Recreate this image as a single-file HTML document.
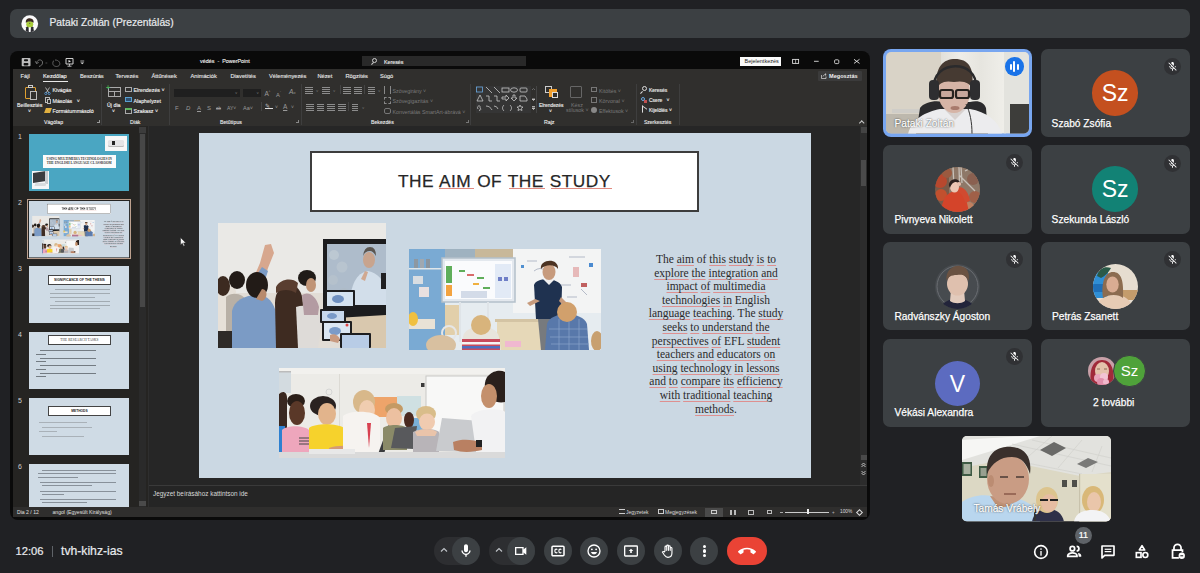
<!DOCTYPE html>
<html><head><meta charset="utf-8">
<style>
*{margin:0;padding:0;box-sizing:border-box}
html,body{width:1200px;height:573px;overflow:hidden;background:#202124;font-family:"Liberation Sans",sans-serif;position:relative}
.a{position:absolute}
.topbar{left:10px;top:9px;width:1180px;height:29px;background:#3c4043;border-radius:7px}
.tb-name{left:49.5px;top:16.5px;font-size:10.3px;color:#e8eaed;white-space:nowrap;-webkit-text-stroke:0.2px #e8eaed}
.ppt{left:10px;top:51px;width:860px;height:469px;background:#0a0a0a;border-radius:8px;overflow:hidden}
.tile{background:#3c4043;border-radius:7px;overflow:hidden}
.nm{font-size:10.2px;color:#fff;white-space:nowrap;-webkit-text-stroke:0.25px #fff;text-shadow:0 0 1px rgba(0,0,0,.35)}
.av{border-radius:50%;color:#fff;text-align:center}
.mute{width:17px;height:17px;border-radius:50%;background:#303134}
.t{font-size:5.3px;color:#f2f2f2;white-space:nowrap;line-height:7px;-webkit-text-stroke:0.12px #f2f2f2}
.t2{color:#9a9a9a;white-space:nowrap;line-height:8px}
.t3{font-size:5.3px;color:#7a7a7a;white-space:nowrap;line-height:7px}
.g{font-size:5.2px;color:#e8e8e8;white-space:nowrap;line-height:7px;-webkit-text-stroke:0.12px #e8e8e8}
.sep{top:84px;width:0.8px;height:41px;background:#3e3e3e}
.lines{width:7.5px;height:7px;background:repeating-linear-gradient(#8c8c8c 0 0.9px,transparent 0.9px 2.1px)}
.chev{font-size:4px;color:#777;line-height:5px}
.body{font-family:"Liberation Serif",serif;font-size:11.5px;line-height:13.6px;color:#2b2b2b;text-align:center;white-space:nowrap}
.body u{text-decoration-color:#de9090;text-underline-offset:1.5px;text-decoration-thickness:0.8px}
.num{left:18px;font-size:7px;color:#d0d0d0;line-height:8px}
.thumb{left:29px;width:100px;height:57px;background:#cfdbe5}
.ttl{height:10px;background:#fff;border:0.7px solid #444;font-size:3.2px;line-height:8.6px;text-align:center;color:#333;white-space:nowrap}
.tl{background:repeating-linear-gradient(#cfdbe5 0 1.5px,#9aa5ae 1.5px 2.3px)}
.tl2{background:repeating-linear-gradient(#cfdbe5 0 1px,#6f7880 1px 1.8px,#cfdbe5 1.8px 2.8px,#8e98a0 2.8px 3.5px)}
.img{filter:blur(0.6px)}
.btn{width:28px;height:28px;border-radius:50%;background:#3c4043;top:537px}
</style></head><body>

<!-- top bar -->
<div class="a topbar"></div>
<svg class="a" style="left:21px;top:14.5px" width="17.5" height="17.5" viewBox="0 0 20 20">
<defs><clipPath id="cpa"><circle cx="10" cy="10" r="9.6"/></clipPath></defs>
<circle cx="10" cy="10" r="9.6" fill="#fafafa"/>
<g clip-path="url(#cpa)">
<path d="M5 20 L6 14 C7 12 13 12 14 14 L15 20Z" fill="#2a2a30"/>
<path d="M8.6 13.5 L11.4 13.5 L11 20 H9Z" fill="#fff"/>
<ellipse cx="10" cy="10.5" rx="4" ry="3.6" fill="#a8cc3a"/>
<path d="M5.6 9 C5 4 9 3.5 11 4 C14 4.5 15 7 14.2 9 C13 7 8 6.5 5.6 9Z" fill="#3a2a22"/>
<circle cx="10" cy="9.5" r="0.6" fill="#333"/>
</g></svg>
<div class="a tb-name">Pataki Zoltán (Prezentálás)</div>

<!-- PowerPoint window -->
<div class="a ppt" id="ppt"></div>
<!-- ribbon bg -->
<div class="a" style="left:13px;top:69px;width:854px;height:57px;background:#302f2d"></div>
<!-- main area -->
<div class="a" style="left:13px;top:126px;width:135px;height:381px;background:#252422"></div>
<div class="a" style="left:148px;top:126px;width:719px;height:359px;background:#262626"></div>
<div class="a" style="left:148px;top:485px;width:719px;height:1px;background:#3a3a3a"></div>
<div class="a" style="left:148px;top:486px;width:719px;height:21px;background:#252525"></div>
<div class="a" style="left:13px;top:507px;width:854px;height:9.7px;background:#2f2e2d"></div>
<!-- title bar -->
<svg class="a" style="left:21px;top:57px" width="66" height="10" viewBox="0 0 66 10">
<path d="M1.5 1 H8.5 Q9.5 1 9.5 2 V8.5 Q9.5 9.3 8.5 9.3 H1.5 Q0.7 9.3 0.7 8.5 V2 Q0.7 1 1.5 1Z" fill="#bdbdbd"/>
<rect x="3" y="2.2" width="4" height="2" rx="0.8" fill="#111"/><rect x="2.6" y="6" width="4.8" height="2.4" rx="0.8" fill="#111"/>
<path d="M15.5 6.5 C16 2 21 2 21.5 5 C22 8 19.5 9 18 9.5 M15.5 6.5 L14.3 4.3 M15.5 6.5 L17.7 5.5" stroke="#7a7a7a" stroke-width="0.9" fill="none"/>
<path d="M24.5 6 h1.8" stroke="#666" stroke-width="0.7"/>
<path d="M34 3 C38 3 39.5 6 38.5 8 C37.5 10 33 10 32 7.5 C31.5 6 32 4 33 3.5" stroke="#6a6a6a" stroke-width="0.9" fill="none"/>
<path d="M45 1.5 H52 V7 H45Z" fill="none" stroke="#cfcfcf" stroke-width="1"/><path d="M47.5 3 L50 4.3 L47.5 5.6Z" fill="#eee"/><path d="M48.5 7 V8.8 M46.5 9.2 H50.5" stroke="#cfcfcf" stroke-width="0.9"/>
<path d="M59.3 4 H63.2" stroke="#ccc" stroke-width="0.8"/><path d="M59.3 5.5 H63.2 L61.25 7.3Z" fill="#ddd"/>
</svg>
<div class="a" style="left:200px;top:58px;font-size:5.4px;color:#f0f0f0;white-space:nowrap;-webkit-text-stroke:0.12px #f0f0f0">védés&nbsp; - &nbsp;PowerPoint</div>
<div class="a" style="left:362px;top:56px;width:164px;height:10px;background:#292929"></div>
<div class="a" style="left:372px;top:58px;width:5px;height:5px;border:1px solid #ccc;border-radius:50%"></div>
<div class="a" style="left:371px;top:63px;width:3px;height:1px;background:#ccc;transform:rotate(-45deg)"></div>
<div class="a" style="left:384px;top:58.5px;font-size:5.3px;color:#f0f0f0;-webkit-text-stroke:0.12px #f0f0f0">Keresés</div>
<div class="a" style="left:740px;top:57px;width:41px;height:9px;background:#fafafa"></div>
<div class="a" style="left:744.5px;top:58.2px;font-size:5.5px;color:#1a1a1a">Bejelentkezés</div>
<svg class="a" style="left:790px;top:57px" width="72" height="9" viewBox="0 0 72 9">
<rect x="2.6" y="2.4" width="6" height="4" fill="none" stroke="#ddd" stroke-width="0.9"/><path d="M5.6 2.4 V6.4" stroke="#ddd" stroke-width="0.7"/>
<path d="M24 4.3 H28.7" stroke="#ddd" stroke-width="0.9"/>
<rect x="44.6" y="2.8" width="4.2" height="3.8" rx="1" fill="none" stroke="#ddd" stroke-width="0.9"/>
<path d="M64 2.3 L69.5 6.4 M69.5 2.3 L64 6.4" stroke="#e6e6e6" stroke-width="0.9"/>
</svg>
<!-- tabs -->
<div class="a" style="left:13px;top:73px;width:600px;height:8px;font-size:5.7px;color:#e6e6e6;white-space:nowrap;-webkit-text-stroke:0.12px #e6e6e6">
<span class="a" style="left:7.5px">Fájl</span>
<span class="a" style="left:30px;color:#fff">Kezdőlap</span>
<span class="a" style="left:67px">Beszúrás</span>
<span class="a" style="left:102.5px">Tervezés</span>
<span class="a" style="left:138.5px">Áttűnések</span>
<span class="a" style="left:177.5px">Animációk</span>
<span class="a" style="left:217.5px">Diavetítés</span>
<span class="a" style="left:256px">Véleményezés</span>
<span class="a" style="left:304.5px">Nézet</span>
<span class="a" style="left:332.5px">Rögzítés</span>
<span class="a" style="left:367px">Súgó</span>
</div>
<div class="a" style="left:43px;top:80.5px;width:25px;height:1.3px;background:#e8e8e8"></div>
<div class="a" style="left:818px;top:71px;width:44px;height:10px;background:#3b3b3b;border-radius:1px"></div>
<svg class="a" style="left:821px;top:72.5px" width="6" height="6" viewBox="0 0 6 6"><path d="M0.5 2 V5.5 H5 V3.5 M2 3.5 C2.5 2 3.5 1.5 5 1.5 M4 0.5 L5.2 1.5 L4 2.5" stroke="#ddd" stroke-width="0.7" fill="none"/></svg>
<div class="a" style="left:829px;top:72.5px;font-size:5.6px;color:#f0f0f0;font-weight:bold">Megosztás</div>
<!-- ribbon groups -->
<div class="a rb" style="left:0;top:0">
<!-- Vágólap -->
<div class="a" style="left:25px;top:87px;width:11px;height:12px;border:1.5px solid #e0a030;border-radius:1px"></div>
<div class="a" style="left:28px;top:85px;width:5px;height:3px;background:#302f2d;border:1px solid #ccc"></div>
<div class="a" style="left:30px;top:91px;width:7px;height:9px;background:#302f2d;border:1.2px solid #bbb"></div>
<div class="a t" style="left:17px;top:101.5px">Beillesztés</div>
<div class="a t" style="left:28px;top:107.5px;font-size:5px">&#709;</div>
<svg class="a" style="left:44px;top:86.5px" width="7" height="8" viewBox="0 0 7 8"><path d="M1.5 0.5 L5 6 M5.5 0.5 L2 6" stroke="#c8c8c8" stroke-width="0.8"/><circle cx="1.8" cy="6.5" r="1.1" fill="none" stroke="#5aa0e0" stroke-width="0.8"/><circle cx="5.2" cy="6.5" r="1.1" fill="none" stroke="#5aa0e0" stroke-width="0.8"/></svg>
<div class="a t" style="left:52.5px;top:87px">Kivágás</div>
<div class="a" style="left:45px;top:97px;width:5px;height:6px;border:1px solid #bbb"></div>
<div class="a" style="left:47px;top:99px;width:4px;height:5px;border:1px solid #bbb;background:#302f2d"></div>
<div class="a t" style="left:52.5px;top:97.5px">Másolás&nbsp;&nbsp;&nbsp;&#709;</div>
<div class="a" style="left:45px;top:108px;width:6px;height:5px;background:#e0b040;transform:skewX(-20deg)"></div>
<div class="a t" style="left:52.5px;top:108px">Formátummásoló</div>
<div class="a g" style="left:44px;top:119px">Vágólap</div>
<div class="a" style="left:97px;top:120px;width:3px;height:3px;border-right:0.8px solid #999;border-bottom:0.8px solid #999"></div>
<div class="a sep" style="left:100.5px"></div>
<!-- Diák -->
<div class="a" style="left:108px;top:87px;width:13px;height:10px;border:1.3px solid #aaa"></div>
<div class="a" style="left:108px;top:90.5px;width:13px;height:1px;background:#aaa"></div>
<div class="a" style="left:114px;top:90.5px;width:1px;height:6px;background:#aaa"></div>
<div class="a" style="left:106px;top:84px;font-size:7px;color:#4caf50;font-weight:bold">+</div>
<div class="a t" style="left:107px;top:101.5px">Új dia</div>
<div class="a t" style="left:112px;top:107.5px;font-size:5px">&#709;</div>
<div class="a" style="left:125px;top:86.5px;width:7px;height:5px;border:1px solid #aaa"></div>
<div class="a t" style="left:133.5px;top:86.5px">Elrendezés&nbsp;&#709;</div>
<div class="a" style="left:125px;top:97px;width:7px;height:5px;border:1px solid #5aa0d0;background:#2f4f6f"></div>
<div class="a t" style="left:133.5px;top:97.5px">Alaphelyzet</div>
<div class="a" style="left:125px;top:108px;width:7px;height:6px;border:1px solid #aaa;border-top:2px solid #5cb85c"></div>
<div class="a t" style="left:133.5px;top:108px">Szakasz&nbsp;&#709;</div>
<div class="a g" style="left:130px;top:119px">Diák</div>
<div class="a sep" style="left:169px"></div>
<!-- Betűtípus -->
<div class="a" style="left:174px;top:89px;width:66px;height:8px;background:#1f1f1f"></div>
<div class="a" style="left:242.5px;top:89px;width:18.5px;height:8px;background:#1f1f1f"></div>
<div class="a" style="left:235px;top:89.5px;font-size:4px;color:#777">&#709;</div>
<div class="a" style="left:256.5px;top:89.5px;font-size:4px;color:#777">&#709;</div>
<div class="a t2" style="left:264.5px;top:88px;font-size:6.5px">A<sup style="font-size:3px">^</sup></div>
<div class="a t2" style="left:276px;top:88.5px;font-size:5.8px">A<sup style="font-size:3px">ˇ</sup></div>
<div class="a t2" style="left:289px;top:88px;font-size:6.5px;font-style:italic">A<span style="font-size:4px">o</span></div>
<div class="a t2" style="left:175px;top:103.5px;font-size:6px;white-space:nowrap;word-spacing:0"><span class="a" style="left:0">F</span><span class="a" style="left:11px;font-style:italic">D</span><span class="a" style="left:22px;text-decoration:underline">A</span><span class="a" style="left:32px">S</span><span class="a" style="left:41px;font-size:4.5px;top:1px;text-decoration:line-through">ab</span><span class="a" style="left:52px;font-size:5px">AY&#709;</span><span class="a" style="left:68px;font-size:5.5px">Aa&#709;</span></div>
<div class="a" style="left:265px;top:103px;width:8px;height:6px;border-bottom:1.5px solid #ddd;font-size:6px;color:#bbb;line-height:6px">&#9998;</div>
<div class="a t2" style="left:275px;top:103px;font-size:5px">&#709;</div>
<div class="a t2" style="left:283px;top:102.5px;font-size:6.5px;text-decoration:underline">A</div>
<div class="a t2" style="left:291px;top:103px;font-size:5px">&#709;</div>
<div class="a sep" style="left:260.5px;top:102px;height:9px;background:#444"></div>
<div class="a g" style="left:220px;top:119px">Betűtípus</div>
<div class="a" style="left:296px;top:120px;width:3px;height:3px;border-right:0.8px solid #888;border-bottom:0.8px solid #888"></div>
<div class="a sep" style="left:301px"></div>
<!-- Bekezdés icons -->
<div class="a lines" style="left:305px;top:87px"></div>
<div class="a lines" style="left:322px;top:87px"></div>
<div class="a lines" style="left:343px;top:87px"></div>
<div class="a lines" style="left:354px;top:87px"></div>
<div class="a lines" style="left:368px;top:87px;width:6.5px"></div>
<div class="a lines" style="left:306px;top:104px"></div>
<div class="a lines" style="left:316.5px;top:104px"></div>
<div class="a lines" style="left:327px;top:104px"></div>
<div class="a lines" style="left:338px;top:104px"></div>
<div class="a lines" style="left:352px;top:104px;width:6px"></div>
<div class="a chev" style="left:316px;top:88px">&#709;</div>
<div class="a chev" style="left:333px;top:88px">&#709;</div>
<div class="a chev" style="left:378px;top:88px">&#709;</div>
<div class="a chev" style="left:362px;top:104.5px">&#709;</div>
<div class="a" style="left:340px;top:85px;width:0.8px;height:9px;background:#444"></div>
<div class="a" style="left:364px;top:85px;width:0.8px;height:9px;background:#444"></div>
<div class="a" style="left:347.5px;top:102px;width:0.8px;height:9px;background:#444"></div>
<div class="a" style="left:384px;top:86px;width:7px;height:8px;border-left:1px solid #888;border-right:1px solid #888"></div>
<div class="a" style="left:384px;top:97px;width:7px;height:7px;border:1px dashed #888"></div>
<div class="a" style="left:384px;top:108px;width:7px;height:6px;border:1px solid #777;border-radius:2px"></div>
<div class="a t3" style="left:392.5px;top:87.5px">Szövegirány&nbsp;&#709;</div>
<div class="a t3" style="left:392.5px;top:98px">Szövegigazítás&nbsp;&#709;</div>
<div class="a t3" style="left:392.5px;top:108.5px">Konvertálás SmartArt-ábrává&nbsp;&#709;</div>
<div class="a g" style="left:371px;top:119px">Bekezdés</div>
<div class="a" style="left:466px;top:120px;width:3px;height:3px;border-right:0.8px solid #777;border-bottom:0.8px solid #777"></div>
<div class="a sep" style="left:470px"></div>
<!-- Rajz -->
<div class="a" style="left:475.5px;top:85.5px;width:55px;height:27px;background:#353535"></div>
<svg class="a" style="left:475px;top:85px" width="62" height="28" viewBox="0 0 62 28" fill="none" stroke="#c8c8c8" stroke-width="0.8">
<rect x="1.5" y="2" width="6" height="5" stroke="#6aa8e0"/><path d="M11 2 L17 8 M19 2 L25 8"/><rect x="27" y="3" width="7" height="4"/><ellipse cx="39" cy="5" rx="3.5" ry="2.2"/><rect x="45" y="3" width="7" height="4" rx="1"/>
<path d="M2 16 L5 10 L8 16 Z M11 11 h3 v5 h3 M19 11 h3 v5 h3 M27 12 h4 v-2 l3 3 -3 3 v-2 h-4z M38 10 v3 h-2 l3 3 3-3 h-2 v-3z M45 11 h5 l2 3 v2 h-7z"/>
<path d="M3 24 c-2-3 3-5 2-1 c3 2-3 3 0 2 M11 21 c3 0 5 2 6 4 M19 21 q3 0 4 3 M29 20 c-2 2-2 4 0 6 M35 20 c2 2 2 4 0 6 M45 20 l1 2 2 0-1.5 1.5 .5 2-2-1-2 1 .5-2-1.5-1.5 2 0z"/>
<path d="M57 5 l1.5-1.5 1.5 1.5" stroke="#777"/><path d="M57 14 h3 l-1.5 1.5z" fill="#aaa"/><path d="M57 23 h3 l-1.5 1.5z M57 21.5 h3" fill="#aaa"/>
</svg>
<div class="a" style="left:536px;top:85.5px;width:0.8px;height:27px;background:#444"></div>
<div class="a" style="left:545px;top:86px;width:7px;height:7px;border:1px solid #ccc;background:#302f2d"></div>
<div class="a" style="left:549px;top:89px;width:8px;height:8px;background:#f0a030"></div>
<div class="a" style="left:552px;top:92px;width:6px;height:6px;border:1px solid #ddd;background:#302f2d"></div>
<div class="a t" style="left:539px;top:102px;font-size:4.9px">Elrendezés</div>
<div class="a t" style="left:549px;top:107.5px;font-size:5px">&#709;</div>
<div class="a" style="left:570px;top:86px;width:12px;height:12px;border:1px solid #666;border-radius:1px"></div>
<div class="a t3" style="left:571px;top:101.5px">Kész</div>
<div class="a t3" style="left:566px;top:107px">stílusok&nbsp;&#709;</div>
<div class="a" style="left:591px;top:86.5px;width:6px;height:5px;border:1px solid #777"></div>
<div class="a" style="left:591px;top:97px;width:6px;height:6px;border:1px solid #777"></div>
<div class="a" style="left:591px;top:107px;width:6px;height:6px;border-radius:50%;background:#888"></div>
<div class="a t3" style="left:599px;top:87.5px">Kitöltés&nbsp;&#709;</div>
<div class="a t3" style="left:599px;top:97.5px">Körvonal&nbsp;&#709;</div>
<div class="a t3" style="left:599px;top:108px">Effektusok&nbsp;&#709;</div>
<div class="a g" style="left:544px;top:119px">Rajz</div>
<div class="a" style="left:631px;top:120px;width:3px;height:3px;border-right:0.8px solid #666;border-bottom:0.8px solid #666"></div>
<div class="a sep" style="left:636px"></div>
<!-- Szerkesztés -->
<div class="a" style="left:642px;top:86px;width:5px;height:5px;border:1px solid #ddd;border-radius:50%"></div>
<div class="a" style="left:640px;top:91.5px;width:3px;height:1px;background:#ddd;transform:rotate(-45deg)"></div>
<div class="a t" style="left:649px;top:87px;font-size:5px">Keresés</div>
<div class="a" style="left:641px;top:97px;width:4px;height:4px;border:1px solid #6aa8e0;border-radius:50%"></div>
<div class="a" style="left:644px;top:100px;width:3px;height:3px;background:#c05050"></div>
<div class="a t" style="left:649px;top:97px;font-size:5px">Csere&nbsp;&nbsp;&nbsp;&#709;</div>
<div class="a" style="left:642px;top:107px;width:5px;height:7px;border-left:1px solid #ddd;border-top:1px solid #ddd;transform:skewY(35deg)"></div>
<div class="a t" style="left:649px;top:107px;font-size:5px">Kijelölés&nbsp;&#709;</div>
<div class="a g" style="left:644px;top:119px;font-size:5px">Szerkesztés</div>
<div class="a sep" style="left:679px"></div>
<div class="a" style="left:860px;top:121px;width:3.5px;height:3.5px;border-left:0.9px solid #ccc;border-top:0.9px solid #ccc;transform:rotate(45deg)"></div>
</div>


<!-- SLIDE -->
<svg width="0" height="0" style="position:absolute"><defs><symbol id="img1" viewBox="0 0 168 125">
<rect width="168" height="125" fill="#eae9e6"/>
<rect x="0" y="70" width="168" height="55" fill="#e2ddd6"/>
<rect x="105" y="16" width="63" height="80" fill="#1c1c1e"/>
<rect x="109" y="21" width="59" height="61" fill="#aebccb"/>
<circle cx="116" cy="32" r="5" fill="#bcc8d2"/><circle cx="124" cy="44" r="5.5" fill="#b8c4cf"/><circle cx="115" cy="57" r="5" fill="#b5c1cc"/><circle cx="126" cy="70" r="5" fill="#aebbc7"/>
<path d="M131 82 C133 62 138 50 150 48 C160 50 166 58 168 66 V82Z" fill="#d2deea"/>
<ellipse cx="151" cy="37" rx="6" ry="8" fill="#c8a48e"/>
<path d="M145 33 q1-9 7-9 q6 0 6 9 q-3-5-6-5 q-5 0-7 5z" fill="#5a5550"/>
<path d="M143 56 l4-8 3 1-3 9z" fill="#d0a890"/>
<rect x="163" y="50" width="5" height="16" fill="#202022"/>
<path d="M118 95 L168 92 V125 H124Z" fill="#d9c8ae"/>
<path d="M0 66 C4 58 14 58 18 68 L20 125 H0Z" fill="#e6e0d8"/>
<ellipse cx="5" cy="63" rx="7" ry="10" fill="#3c2a20"/>
<path d="M8 74 C14 68 26 70 30 80 L30 112 H8 Z" fill="#b8b0a6"/>
<ellipse cx="19" cy="57" rx="8" ry="9" fill="#221b17"/>
<path d="M0 108 H40 V125 H0Z" fill="#2e2a28"/>
<path d="M36 54 L42 40 L47 22 L53 21 L56 30 L50 45 L46 58Z" fill="#d7a78e"/>
<path d="M36 56 L44 44 L50 48 L46 60Z" fill="#7c9cc6"/>
<path d="M14 88 C16 78 26 72 40 72 C50 72 56 80 58 90 L60 125 H14Z" fill="#7b9bc5"/>
<ellipse cx="39" cy="62" rx="11" ry="13" fill="#221b17"/>
<path d="M44 66 C50 66 50 76 44 78 L38 76Z" fill="#b88a6c"/>
<path d="M57 80 C57 66 66 60 74 62 C82 64 85 72 85 84 L82 125 H58Z" fill="#3e2b21"/>
<path d="M58 64 C62 56 74 54 80 60 L78 70 C72 66 64 66 58 70Z" fill="#5a3e30"/>
<path d="M78 84 C90 80 100 86 104 100 L100 125 H80Z" fill="#dedbd8"/>
<ellipse cx="89" cy="55" rx="9" ry="8" fill="#201b18"/>
<ellipse cx="93" cy="62" rx="5" ry="7" fill="#c09476"/>
<path d="M84 72 C90 68 98 72 101 84 L100 92 H86Z" fill="#b39ba2"/>
<rect x="107" y="67" width="30" height="18" rx="1" fill="#1e1e20"/><rect x="109" y="69" width="26" height="14" fill="#d4e2f0"/><ellipse cx="120" cy="76" rx="6" ry="4" fill="#6f90c0"/>
<rect x="102" y="86" width="26" height="14" rx="1" fill="#1e1e20"/><rect x="104" y="88" width="22" height="10" fill="#c8d8ec"/><ellipse cx="114" cy="93" rx="5" ry="3" fill="#7a9ac8"/>
<rect x="104" y="98" width="30" height="20" rx="1" fill="#1e1e20"/><rect x="106" y="100" width="26" height="16" fill="#dbe6f2"/><ellipse cx="117" cy="108" rx="6" ry="4" fill="#7b9bc8"/><circle cx="129" cy="102" r="1.5" fill="#d44"/>
<rect x="122" y="110" width="31" height="15" rx="1" fill="#1e1e20"/><rect x="124" y="112" width="27" height="13" fill="#b8cce6"/>
<path d="M112 112 C116 110 120 112 122 116 L120 120 L112 118Z" fill="#c89a80"/>
</symbol><symbol id="img2" viewBox="0 0 192 101">
<rect width="192" height="101" fill="#e6ecf0"/>
<rect x="0" y="0" width="36" height="101" fill="#7aaad3"/>
<rect x="0" y="19" width="36" height="1.5" fill="#dfe6ea"/>
<rect x="5" y="10" width="4" height="9" fill="#8d98a2"/><rect x="11" y="10" width="4" height="9" fill="#a0a8b0"/><rect x="17" y="10" width="4" height="9" fill="#8a949e"/>
<rect x="4" y="27" width="10" height="8" fill="#d8dde2"/><rect x="10" y="38" width="10" height="10" fill="#e8e0e0"/>
<rect x="36" y="0" width="30" height="12" fill="#9fb2c0"/><rect x="66" y="0" width="38" height="12" fill="#c8b89a"/>
<rect x="104" y="0" width="88" height="64" fill="#f3f4f4"/>
<path d="M118 12 h10 M125 22 q6-5 12 0 M160 8 h16 M150 36 h12 M172 40 l6 6 M158 48 h10" stroke="#9aa2b4" stroke-width="0.7" fill="none"/>
<rect x="164" y="18" width="6" height="10" fill="#e0a0a0" opacity="0.7"/><rect x="172" y="34" width="6" height="4" fill="#c06060"/><rect x="180" y="14" width="4" height="4" fill="#4a8ad0"/><rect x="112" y="16" width="3" height="3" fill="#5090d0"/>
<rect x="33" y="9" width="73" height="44" fill="#e3e8ee" stroke="#b4c0ca" stroke-width="1.5"/>
<rect x="36" y="12" width="67" height="38" fill="#fafbfd"/>
<rect x="37" y="17" width="6" height="17" fill="#5fae5a"/><rect x="37" y="36" width="6" height="11" fill="#f3a340"/>
<rect x="50" y="21" width="6" height="2" fill="#5fae5a"/><rect x="58" y="25" width="7" height="2" fill="#d86b6b"/><rect x="68" y="28" width="7" height="2" fill="#5fae5a"/><rect x="64" y="34" width="6" height="2" fill="#f0b040"/><rect x="74" y="38" width="7" height="2" fill="#5fae5a"/>
<rect x="86" y="15" width="16" height="34" fill="#e2eaf6"/><rect x="89" y="28" width="4" height="4" fill="#6f7fc7"/><rect x="95" y="28" width="4" height="4" fill="#6f7fc7"/>
<rect x="52" y="42" width="26" height="7" fill="#d3dbe8"/>
<rect x="50" y="53" width="2" height="40" fill="#dfe4e8"/><rect x="78" y="53" width="2" height="40" fill="#dfe4e8"/>
<rect x="36" y="56" width="14" height="30" fill="#e2cfaa"/>
<rect x="0" y="70" width="26" height="10" fill="#e8e2d6"/>
<ellipse cx="4" cy="70" rx="5" ry="7" fill="#f0c040"/>
<circle cx="40" cy="84" r="7" fill="none" stroke="#e6e6e6" stroke-width="2"/>
<rect x="88" y="72" width="44" height="29" fill="#e6d8b8"/>
<rect x="86" y="70" width="48" height="3" fill="#d4c4a4"/>
<path d="M125 36 C127 28 150 28 153 38 L152 70 H127Z" fill="#1f3250"/>
<path d="M134 30 L140 36 L146 30Z" fill="#f0f0f0"/>
<ellipse cx="140" cy="23" rx="6.5" ry="8" fill="#c79b7d"/>
<path d="M132 20 C130 10 150 8 149 20 C146 15 136 15 132 20Z" fill="#4c3322"/>
<path d="M126 50 L118 54 L121 57 L131 52Z" fill="#c79b7d"/>
<path d="M152 48 L158 54 L155 57 L150 52Z" fill="#c79b7d"/>
<path d="M129 70 H151 L149 101 H132Z" fill="#777a7e"/>
<path d="M138 75 C141 62 174 62 178 75 L180 101 H136Z" fill="#5878aa"/>
<path d="M140 80 h38 M141 88 h38 M142 95 h38 M150 70 v31 M160 68 v33 M170 70 v31" stroke="#8aa4cc" stroke-width="0.7"/>
<ellipse cx="158" cy="63" rx="10" ry="10" fill="#d1a06c"/>
<path d="M54 88 C56 74 88 74 90 88 L92 101 H52Z" fill="#e8e4dc"/>
<ellipse cx="72" cy="76" rx="10" ry="10" fill="#d8b47c"/>
<path d="M53 90 h38 v11 h-38z" fill="#c84a5c"/><path d="M53 93 h38 v2.5 h-38z" fill="#f4f4f4"/><path d="M53 97 h38 v2.5 h-38z" fill="#4b6fc0"/>
<ellipse cx="32" cy="96" rx="15" ry="10" fill="#d8c0a0"/>
<ellipse cx="188" cy="92" rx="6" ry="10" fill="#c8a070"/>
<rect x="96" y="92" width="16" height="6" fill="#f0b8d0"/>
</symbol><symbol id="img3" viewBox="0 0 226 90">
<rect width="226" height="90" fill="#ecebe7"/>
<rect x="0" y="0" width="226" height="6" fill="#f2f1ee"/>
<rect x="0" y="3" width="12" height="22" fill="#d3dbe0"/><rect x="0" y="3" width="12" height="1.5" fill="#bbb"/>
<rect x="60" y="6" width="1" height="60" fill="#dcdad4"/>
<circle cx="50" cy="24" r="3" fill="none" stroke="#cfcfcf" stroke-width="0.8"/>
<rect x="147" y="8" width="78" height="58" fill="#f8f8f7" stroke="#c8c8c6" stroke-width="1"/>
<rect x="95" y="29" width="23" height="20" fill="#eea46a"/>
<rect x="118" y="28" width="24" height="20" fill="#cfe0e2"/>
<rect x="142" y="15" width="3.5" height="4" fill="#3a3a3a"/>
<rect x="130" y="50" width="20" height="12" fill="#7ab0d8"/>
<path d="M0 26 C4 22 8 24 8 30 V90 H0Z" fill="#3a2820"/>
<path d="M0 58 H6 V88 H0Z" fill="#2e80d0"/>
<ellipse cx="17" cy="33" rx="9" ry="7" fill="#2a1e18"/>
<ellipse cx="18" cy="45" rx="8" ry="12" fill="#5a3828"/>
<path d="M3 62 C8 57 24 57 30 62 L31 88 H3Z" fill="#eea6bc"/>
<path d="M20 70 h10 M20 73 h10 M20 76 h10" stroke="#444" stroke-width="1"/>
<ellipse cx="44" cy="38" rx="13" ry="10" fill="#2a2220"/>
<ellipse cx="48" cy="46" rx="9" ry="11" fill="#e2b48c"/>
<path d="M30 60 C36 55 58 55 65 60 L66 82 H30Z" fill="#f6d22c"/>
<path d="M50 80 C60 76 80 78 96 82 L96 88 H50Z" fill="#d49a76"/>
<ellipse cx="85" cy="34" rx="11" ry="12" fill="#d8b88a"/>
<ellipse cx="88" cy="42" rx="8" ry="10" fill="#f0cdb0"/>
<path d="M64 48 C70 42 96 42 101 50 L101 84 H64Z" fill="#f6f3f0"/>
<path d="M88 55 L92 55 L90 80Z" fill="#d84050"/>
<path d="M99 86 L110 56 L114 57 L104 89Z" fill="#3a3b3d"/>
<ellipse cx="115" cy="41" rx="9" ry="6" fill="#c49a64"/>
<ellipse cx="115" cy="50" rx="8" ry="10" fill="#ecc0a0"/>
<path d="M104 60 C108 56 124 56 128 60 L128 82 H104Z" fill="#8a8a68"/>
<ellipse cx="130" cy="52" rx="5" ry="8" fill="#4a2a20"/>
<path d="M112 80 L116 60 L138 58 L135 81Z" fill="#58595c"/>
<ellipse cx="147" cy="46" rx="10" ry="8" fill="#d9bd8a"/>
<ellipse cx="148" cy="54" rx="8" ry="8.5" fill="#f0cbb0"/>
<path d="M134 64 C140 60 156 60 160 64 L160 84 H134Z" fill="#b8b4b8"/>
<path d="M136 64 C142 60 154 60 158 64 L156 68 H138Z" fill="#eac4aa"/>
<path d="M157 83 L163 50 L202 53 L197 84Z" fill="#c9cbce"/>
<path d="M206 20 C204 6 218 0 226 4 V34 C218 36 210 32 206 20Z" fill="#2a201c"/>
<ellipse cx="210" cy="28" rx="8" ry="12" fill="#c4906c"/>
<path d="M192 48 C198 40 222 40 226 44 V90 H198Z" fill="#f2f2f3"/>
<path d="M174 74 C184 70 194 72 203 74 V82 C194 84 184 85 175 82Z" fill="#b98062"/>
<rect x="197" y="72" width="6" height="7" fill="#222"/>
<rect x="0" y="84" width="226" height="6" fill="#dadada"/>
<path d="M30 81 H76 V86 H30Z" fill="#e8e8e8"/>
</symbol></defs></svg>
<div class="a" style="left:199px;top:133px;width:611.5px;height:344.5px">
<div class="a" style="left:0;top:0;width:611.5px;height:344.5px;background:#cbd8e3"></div>
<div class="a" style="left:111px;top:18px;width:389px;height:61px;background:#fff;border:2px solid #3d3d3d"></div>
<div class="a" style="left:199px;top:38px;font-size:17.3px;letter-spacing:0.5px;word-spacing:0.6px;color:#262626;white-space:nowrap;line-height:20px;-webkit-text-stroke:0.25px #262626">THE AIM OF THE STUDY</div>
<div class="a" style="left:240px;top:55px;width:35px;height:1px;background:#e08a80"></div>
<div class="a" style="left:310px;top:55px;width:36px;height:1px;background:#e08a80"></div>
<div class="a" style="left:352px;top:55px;width:61px;height:1px;background:#e08a80"></div>
<div class="a body" style="left:417px;top:120px;width:200px">
<div>The <u>aim</u> of <u>this</u> <u>study</u> <u>is</u> <u>to</u></div>
<div><u>explore</u> <u>the</u> <u>integration</u> <u>and</u></div>
<div><u>impact</u> <u>of</u> <u>multimedia</u></div>
<div><u>technologies</u> <u>in</u> English</div>
<div><u>language</u> <u>teaching</u>. The <u>study</u></div>
<div><u>seeks</u> <u>to</u> <u>understand</u> <u>the</u></div>
<div><u>perspectives</u> <u>of</u> EFL <u>student</u></div>
<div><u>teachers</u> <u>and</u> <u>educators</u> <u>on</u></div>
<div><u>using</u> <u>technology</u> <u>in</u> <u>lessons</u></div>
<div><u>and</u> <u>to</u> <u>compare</u> <u>its</u> <u>efficiency</u></div>
<div><u>with</u> <u>traditional</u> <u>teaching</u></div>
<div><u>methods</u>.</div>
</div>
<svg class="a img" style="left:19px;top:90px" width="168" height="125"><use href="#img1"/></svg>
<svg class="a img" style="left:210px;top:116px" width="192" height="101"><use href="#img2"/></svg>
<svg class="a img" style="left:80px;top:235px" width="226" height="90"><use href="#img3"/></svg>
</div>

<!-- slide panel thumbnails -->
<div class="a num" style="top:133px">1</div>
<div class="a num" style="top:199px">2</div>
<div class="a num" style="top:265px">3</div>
<div class="a num" style="top:331px">4</div>
<div class="a num" style="top:397px">5</div>
<div class="a num" style="top:463px">6</div>
<div class="a" style="left:29px;top:134px;width:100px;height:57px;background:#4aa6c2"></div>
<div class="a" style="left:104.5px;top:135.5px;width:22px;height:15px;background:#f7f7f7"></div>
<div class="a" style="left:108.3px;top:139.6px;width:15.3px;height:6.8px;background:#e4e4e6;border-radius:1.5px;box-shadow:0 1px 0 #bbb"></div>
<div class="a" style="left:111.7px;top:141px;width:3.5px;height:3.5px;background:#222"></div>
<div class="a" style="left:42.5px;top:154.5px;width:73.5px;height:13px;background:#fbfbfb"></div>
<div class="a" style="left:42.5px;top:157px;font-family:'Liberation Serif',serif;font-size:3.3px;line-height:4.3px;color:#333;text-align:center;width:73.5px;font-weight:bold;white-space:nowrap">USING MULTIMEDIA TECHNOLOGIES IN<br>THE ENGLISH LANGUAGE CLASSROOM</div>
<div class="a" style="left:31.5px;top:170.5px;width:17px;height:18px;background:#f4f6f8"></div>
<div class="a" style="left:33px;top:171.5px;width:13px;height:9.5px;background:#3a3c40;transform:skewY(-8deg)"></div><div class="a" style="left:45px;top:171px;width:2.5px;height:13px;background:#c8ccd0"></div>
<div class="a" style="left:35px;top:183px;width:11px;height:3px;background:#d8dcdf;transform:skewX(-20deg)"></div>
<!-- thumb 2 -->
<div class="a" style="left:27.2px;top:198.8px;width:103.6px;height:60px;border:1.8px solid #bca08e"></div>
<div class="a" style="left:29px;top:200.6px;width:611.5px;height:344.5px;transform:scale(0.16353);transform-origin:0 0">
<div class="a" style="left:0;top:0;width:611.5px;height:344.5px;background:#cbd8e3"></div>
<div class="a" style="left:111px;top:18px;width:389px;height:61px;background:#fff;border:2px solid #3d3d3d"></div>
<div class="a" style="left:199px;top:38px;font-size:17.3px;letter-spacing:0.5px;word-spacing:0.6px;color:#262626;white-space:nowrap;line-height:20px;-webkit-text-stroke:0.25px #262626">THE AIM OF THE STUDY</div>
<div class="a" style="left:240px;top:55px;width:35px;height:1px;background:#e08a80"></div>
<div class="a" style="left:310px;top:55px;width:36px;height:1px;background:#e08a80"></div>
<div class="a" style="left:352px;top:55px;width:61px;height:1px;background:#e08a80"></div>
<div class="a body" style="left:417px;top:120px;width:200px">
<div>The <u>aim</u> of <u>this</u> <u>study</u> <u>is</u> <u>to</u></div>
<div><u>explore</u> <u>the</u> <u>integration</u> <u>and</u></div>
<div><u>impact</u> <u>of</u> <u>multimedia</u></div>
<div><u>technologies</u> <u>in</u> English</div>
<div><u>language</u> <u>teaching</u>. The <u>study</u></div>
<div><u>seeks</u> <u>to</u> <u>understand</u> <u>the</u></div>
<div><u>perspectives</u> <u>of</u> EFL <u>student</u></div>
<div><u>teachers</u> <u>and</u> <u>educators</u> <u>on</u></div>
<div><u>using</u> <u>technology</u> <u>in</u> <u>lessons</u></div>
<div><u>and</u> <u>to</u> <u>compare</u> <u>its</u> <u>efficiency</u></div>
<div><u>with</u> <u>traditional</u> <u>teaching</u></div>
<div><u>methods</u>.</div>
</div>
<svg class="a img" style="left:19px;top:90px" width="168" height="125"><use href="#img1"/></svg>
<svg class="a img" style="left:210px;top:116px" width="192" height="101"><use href="#img2"/></svg>
<svg class="a img" style="left:80px;top:235px" width="226" height="90"><use href="#img3"/></svg>
</div>
<!-- thumb 3 -->
<div class="a thumb" style="top:266px"></div>
<div class="a ttl" style="top:274.5px;left:47.7px;width:63.5px;height:10.2px;line-height:9px;font-size:3.4px;font-weight:bold;color:#222">SIGNIFICANCE OF THE THESIS</div>
<div class="a" style="left:54.5px;top:289.3px;width:55.5px;height:1.1px;background:#a2abb2"></div>
<div class="a" style="left:50px;top:292.9px;width:60px;height:1.1px;background:#a2abb2"></div>
<div class="a" style="left:50px;top:296.6px;width:45px;height:1.1px;background:#a2abb2"></div>
<div class="a" style="left:54.5px;top:301.2px;width:55.5px;height:1.1px;background:#a2abb2"></div>
<div class="a" style="left:50px;top:304.8px;width:60px;height:1.1px;background:#a2abb2"></div>
<div class="a" style="left:50px;top:308.2px;width:50px;height:1.1px;background:#a2abb2"></div>
<!-- thumb 4 -->
<div class="a thumb" style="top:332px"></div>
<div class="a ttl" style="top:335.2px;left:47.7px;width:63.5px;height:10px;line-height:9px;font-size:3.4px;font-family:'Liberation Serif',serif;color:#333;letter-spacing:0.1px">THE RESEARCH TASKS</div>
<div class="a" style="left:39.7px;top:350.2px;width:56.7px;height:1.1px;background:#737b82"></div>
<div class="a" style="left:35.9px;top:353.7px;width:10px;height:1.1px;background:#737b82"></div>
<div class="a" style="left:39.7px;top:357.6px;width:56.7px;height:1.1px;background:#737b82"></div>
<div class="a" style="left:35.9px;top:361.1px;width:10px;height:1.1px;background:#737b82"></div>
<div class="a" style="left:39.7px;top:365.0px;width:56.7px;height:1.1px;background:#737b82"></div>
<div class="a" style="left:35.9px;top:368.5px;width:10px;height:1.1px;background:#737b82"></div>
<div class="a" style="left:39.7px;top:372.8px;width:56.7px;height:1.1px;background:#737b82"></div>
<div class="a" style="left:35.9px;top:376.3px;width:10px;height:1.1px;background:#737b82"></div>
<!-- thumb 5 -->
<div class="a thumb" style="top:398px"></div>
<div class="a ttl" style="top:406px;left:47.7px;width:63.5px;height:10px;line-height:9px;font-size:3.3px;font-weight:bold;color:#222">METHODS</div>
<div class="a" style="left:39px;top:421.5px;width:48px;height:1.1px;background:#a9b1b8"></div>
<div class="a" style="left:42px;top:427px;width:50px;height:1.1px;background:#a9b1b8"></div>
<div class="a" style="left:39px;top:430.5px;width:18px;height:1.1px;background:#a9b1b8"></div>
<div class="a" style="left:42px;top:436px;width:42px;height:1.1px;background:#a9b1b8"></div>
<!-- thumb 6 -->
<div class="a" style="left:29px;top:464px;width:100px;height:43.3px;background:#cfdbe5"></div>
<div class="a" style="left:42px;top:470px;width:74px;height:1.1px;background:#88919a"></div>
<div class="a" style="left:38px;top:473.4px;width:78px;height:1.1px;background:#88919a"></div>
<div class="a" style="left:38px;top:476.8px;width:40px;height:1.1px;background:#88919a"></div>
<div class="a" style="left:40px;top:482px;width:76px;height:1.1px;background:#88919a"></div>
<div class="a" style="left:42px;top:485.4px;width:50px;height:1.1px;background:#88919a"></div>
<div class="a" style="left:40px;top:490.5px;width:76px;height:1.1px;background:#88919a"></div>
<div class="a" style="left:42px;top:493.9px;width:22px;height:1.1px;background:#88919a"></div>
<div class="a" style="left:40px;top:499px;width:76px;height:1.1px;background:#88919a"></div>
<div class="a" style="left:42px;top:502.4px;width:45px;height:1.1px;background:#88919a"></div>
<!-- panel scrollbar -->
<div class="a" style="left:139px;top:127px;width:7px;height:380px;background:#2a2a2a"></div>
<div class="a" style="left:139px;top:127px;width:7px;height:6px;background:#3c3c3c"></div>
<div class="a" style="left:140px;top:134px;width:5px;height:173px;background:#474747"></div>
<div class="a" style="left:139px;top:500.5px;width:7px;height:5.5px;background:#4a4a4a"></div>
<div class="a" style="left:147.5px;top:126px;width:1px;height:381px;background:#2e2e2e"></div>
<!-- editor scrollbar -->
<div class="a" style="left:860px;top:126px;width:7px;height:359px;background:#2c2c2c"></div>
<div class="a" style="left:860.5px;top:127px;width:6px;height:5.5px;background:#444"></div>
<div class="a" style="left:861px;top:160px;width:5px;height:26px;background:#4a4a4a"></div>
<div class="a" style="left:860.5px;top:454.7px;width:6px;height:5.5px;background:#4a4a4a"></div>
<svg class="a" style="left:861px;top:462px" width="5" height="14" viewBox="0 0 5 14"><path d="M0.5 3 L2.5 1 L4.5 3 M0.5 5 L2.5 3 L4.5 5" stroke="#ccc" stroke-width="0.9" fill="none"/><path d="M0.5 9 L2.5 11 L4.5 9 M0.5 11 L2.5 13 L4.5 11" stroke="#ccc" stroke-width="0.9" fill="none"/></svg>
<svg class="a" style="left:179.5px;top:236.5px" width="7" height="10" viewBox="0 0 7 10"><path d="M0.5 0.5 V8 L2.3 6.3 L3.6 9.3 L4.8 8.8 L3.6 5.9 H6Z" fill="#f4f4f4" stroke="#222" stroke-width="0.5"/></svg>
<!-- notes -->
<div class="a" style="left:153px;top:489.5px;font-size:6.4px;color:#d8d8d8;white-space:nowrap">Jegyzet beírásához kattintson ide</div>
<!-- status bar -->
<div class="a" style="left:17px;top:509px;font-size:5.1px;color:#e0e0e0;white-space:nowrap">Dia 2 / 12</div>
<div class="a" style="left:52.5px;top:509px;font-size:5.1px;color:#e0e0e0;white-space:nowrap">angol (Egyesült Királyság)</div>
<div class="a" style="left:619px;top:509px;width:6px;height:5px;border-bottom:1px solid #ccc;border-top:1px solid #ccc"></div>
<div class="a" style="left:626px;top:509px;font-size:5px;color:#ddd;white-space:nowrap">Jegyzetek</div>
<div class="a" style="left:658px;top:509px;width:6px;height:4.5px;border:0.8px solid #ccc"></div>
<div class="a" style="left:665px;top:509px;font-size:5px;color:#ddd;white-space:nowrap">Megjegyzések</div>
<div class="a" style="left:705px;top:507.5px;width:18px;height:9px;background:#4a4a4a"></div>
<div class="a" style="left:711px;top:510px;width:6px;height:4px;border:0.8px solid #ccc"></div>
<div class="a" style="left:730px;top:509.5px;width:6px;height:5px;background:repeating-linear-gradient(90deg,#bbb 0 2px,transparent 2px 4px)"></div>
<div class="a" style="left:748px;top:509.5px;width:6px;height:5px;border:0.8px solid #bbb"></div>
<div class="a" style="left:767px;top:509.5px;width:5px;height:4px;border:0.8px solid #bbb"></div>
<div class="a" style="left:780px;top:511.5px;width:3px;height:0.8px;background:#aaa"></div>
<div class="a" style="left:785px;top:511.5px;width:44px;height:0.8px;background:#ccc"></div>
<div class="a" style="left:807px;top:509px;width:2px;height:5px;background:#eee"></div>
<div class="a" style="left:832px;top:509.5px;font-size:4.5px;color:#bbb">+</div>
<div class="a" style="left:840px;top:509px;font-size:4.8px;color:#ddd">100%</div>
<div class="a" style="left:857px;top:509.5px;width:5px;height:5px;border:0.8px solid #ddd;transform:rotate(45deg)"></div>

<!-- participant tiles -->
<svg width="0" height="0" style="position:absolute"><defs>
<symbol id="micoff" viewBox="0 0 24 24"><path fill="#fff" d="M19 11h-1.7c0 .74-.16 1.43-.43 2.05l1.23 1.23c.56-.98.9-2.09.9-3.28zm-4.02.17c0-.06.02-.11.02-.17V5c0-1.66-1.34-3-3-3S9 3.34 9 5v.18l5.98 5.99zM4.27 3L3 4.27l6.01 6.01V11c0 1.66 1.33 3 2.99 3 .22 0 .44-.03.65-.08l1.66 1.66c-.71.33-1.5.52-2.31.52-2.76 0-5.3-2.1-5.3-5.1H5c0 3.41 2.72 6.23 6 6.72V21h2v-3.28c.91-.13 1.77-.45 2.54-.9L19.73 21 21 19.73 4.27 3z"/></symbol>
</defs></svg>
<!-- r1c1 Pataki video -->
<div class="a tile" style="left:883px;top:49px;width:149px;height:87.5px;background:#78a6f0;border-radius:8px"></div>
<svg class="a img" style="left:886px;top:52px" width="143" height="81.5" viewBox="0 0 143 81.5">
<defs><clipPath id="cp1"><rect width="143" height="81.5" rx="5"/></clipPath>
<linearGradient id="cur" x1="0" x2="1"><stop offset="0" stop-color="#e2e0da"/><stop offset="0.3" stop-color="#eeede8"/><stop offset="0.6" stop-color="#e6e5df"/><stop offset="1" stop-color="#f0efea"/></linearGradient></defs>
<g clip-path="url(#cp1)">
<rect width="143" height="81.5" fill="#d9d3c7"/>
<rect x="55" y="0" width="65" height="81.5" fill="url(#cur)"/>
<rect x="118" y="0" width="25" height="81.5" fill="#e3e3de"/>
<rect x="124" y="52" width="19" height="30" fill="#3d3d3a"/>
<rect x="0" y="62" width="40" height="20" fill="#bdb8ad"/>
<rect x="6" y="57" width="32" height="4" fill="#cfcdc8"/>
<path d="M30 82 L34 56 C38 50 50 48 56 50 L84 50 C92 48 98 50 100 56 L102 82Z" fill="#2b2b2d"/>
<path d="M22 82 C26 66 40 60 54 57 L84 57 C100 60 112 68 116 82Z" fill="#ececee"/>
<path d="M58 57 L69 68 L80 57Z" fill="#d8d2d0"/>
<ellipse cx="68" cy="40" rx="16" ry="21" fill="#d6b4a6"/>
<path d="M51 37 C48 14 58 7 69 7 C82 7 89 15 86 37 C84 31 78 28 68 30 C58 28 53 31 51 37Z" fill="#463a32"/>
<path d="M48 36 C46 8 92 6 90 36" fill="none" stroke="#2a2a2c" stroke-width="2.4"/>
<rect x="43" y="28" width="10" height="20" rx="4" fill="#2e2e30"/>
<rect x="84" y="28" width="10" height="20" rx="4" fill="#2e2e30"/>
<rect x="54" y="38" width="13" height="8" rx="2" fill="#c8a89c" stroke="#27231f" stroke-width="2.2"/>
<rect x="70" y="38" width="13" height="8" rx="2" fill="#c8a89c" stroke="#27231f" stroke-width="2.2"/>
<ellipse cx="69" cy="56" rx="4.5" ry="2" fill="#a87a6c"/>
<path d="M80 52 C84 60 86 70 86 82" stroke="#333" stroke-width="1" fill="none"/>
</g></svg>
<div class="a" style="left:1005px;top:57.3px;width:18.6px;height:18.6px;border-radius:50%;background:#1a73e8"></div>
<div class="a" style="left:1009.6px;top:63.5px;width:2.2px;height:6px;border-radius:1px;background:#fff"></div>
<div class="a" style="left:1013.2px;top:61.3px;width:2.2px;height:10.6px;border-radius:1px;background:#fff"></div>
<div class="a" style="left:1016.8px;top:63.5px;width:2.2px;height:6px;border-radius:1px;background:#fff"></div>
<div class="a nm" style="left:894.5px;top:117.5px;text-shadow:0 0 2px rgba(0,0,0,.6),0 0 1px rgba(0,0,0,.6)">Pataki Zoltán</div>

<!-- r1c2 -->
<div class="a tile" style="left:1041px;top:49px;width:149px;height:87.5px"></div>
<div class="a av" style="left:1092.3px;top:70.3px;width:45.6px;height:45.6px;background:#c4501f;font-size:23px;line-height:47px">Sz</div>
<div class="a nm" style="left:1051.6px;top:117.5px">Szabó Zsófia</div>
<div class="a mute" style="left:1164.2px;top:58.2px"></div>
<svg class="a" style="left:1167.1px;top:61.1px" width="11" height="11"><use href="#micoff"/></svg>

<!-- r2c1 -->
<div class="a tile" style="left:883px;top:145px;width:149px;height:88.5px"></div>
<svg class="a img" style="left:935px;top:167px" width="45" height="45" viewBox="0 0 45 45">
<defs><clipPath id="cp2"><circle cx="22.5" cy="22.5" r="22.5"/></clipPath></defs>
<g clip-path="url(#cp2)">
<rect width="45" height="45" fill="#7a5a48"/>
<rect x="14" y="0" width="31" height="45" fill="#8e7868"/>
<circle cx="5" cy="14" r="7" fill="#b8482e"/><circle cx="6" cy="28" r="6" fill="#c2502e"/><circle cx="12" cy="6" r="5" fill="#9a5a40"/>
<circle cx="38" cy="12" r="6" fill="#8a6050"/><circle cx="40" cy="30" r="6" fill="#a06048"/><circle cx="34" cy="40" r="5" fill="#c08060"/>
<path d="M18 0 L19 20 M24 0 L24.5 18 M26 0 L27 16 M24 8 L40 24 M30 4 L38 0" stroke="#c8c0b8" stroke-width="1.3"/>
<path d="M6 45 C7 32 12 25 20 24 C26 24 30 28 32 36 L34 45Z" fill="#d4442a"/>
<path d="M23 21 C28 18 34 26 35 34 L30 36 C29 30 26 26 23 25Z" fill="#d04a30"/>
<ellipse cx="19.5" cy="20" rx="4.5" ry="5.5" fill="#ecc6b4"/>
<path d="M14 19 C13 11 25 10 25 17 C23 14 17 14 15 21 Z" fill="#2e2220"/>
<circle cx="24" cy="17" r="2" fill="#e8c0ae"/>
</g></svg>
<div class="a nm" style="left:894.5px;top:213.5px">Pivnyeva Nikolett</div>
<div class="a mute" style="left:1006.3px;top:154.4px"></div>
<svg class="a" style="left:1009.2px;top:157.3px" width="11" height="11"><use href="#micoff"/></svg>

<!-- r2c2 -->
<div class="a tile" style="left:1041px;top:145px;width:149px;height:88.5px"></div>
<div class="a av" style="left:1092.3px;top:166.3px;width:45.6px;height:45.6px;background:#128275;font-size:23px;line-height:47px">Sz</div>
<div class="a nm" style="left:1051.6px;top:213.5px">Szekunda László</div>
<div class="a mute" style="left:1164.2px;top:154.6px"></div>
<svg class="a" style="left:1167.1px;top:157.5px" width="11" height="11"><use href="#micoff"/></svg>

<!-- r3c1 -->
<div class="a tile" style="left:883px;top:242px;width:149px;height:88px"></div>
<svg class="a img" style="left:935px;top:263.5px" width="45" height="45" viewBox="0 0 45 45">
<defs><clipPath id="cp3"><circle cx="22.5" cy="22.5" r="22.5"/></clipPath></defs>
<g clip-path="url(#cp3)">
<rect width="45" height="45" fill="#474b4f"/>
<circle cx="22.5" cy="22.5" r="20.5" fill="none" stroke="#6e7276" stroke-width="0.9"/>
<path d="M5 45 C7 38 14 35 22 35 C31 35 38 38 40 45Z" fill="#22243a"/>
<path d="M16 26 H29 L30 37 C26 40 19 40 15 37Z" fill="#e2cbbd"/>
<ellipse cx="22.5" cy="20" rx="10.5" ry="11.5" fill="#dfc0ae"/>
<path d="M11.5 17 C10 5 20 1 25 2 C33 3 35 10 33.5 17 C31 11 27 10 22 11 C16 11 13 13 11.5 17Z" fill="#6a5242"/>
</g></svg>
<div class="a nm" style="left:894.5px;top:310.5px">Radvánszky Ágoston</div>
<div class="a mute" style="left:1006.3px;top:251.1px"></div>
<svg class="a" style="left:1009.2px;top:254.0px" width="11" height="11"><use href="#micoff"/></svg>

<!-- r3c2 -->
<div class="a tile" style="left:1041px;top:242px;width:149px;height:88px"></div>
<svg class="a img" style="left:1092.5px;top:263.5px" width="45" height="45" viewBox="0 0 45 45">
<defs><clipPath id="cp4"><circle cx="22.5" cy="22.5" r="22.5"/></clipPath></defs>
<g clip-path="url(#cp4)">
<rect width="45" height="45" fill="#e6ddd0"/>
<rect x="0" y="8" width="15" height="26" fill="#2f8fd6"/>
<rect x="0" y="20" width="13" height="8" fill="#1f6fb8"/>
<path d="M4 12 C6 4 12 2 18 4 C16 8 12 12 8 14Z" fill="#2a5a48"/>
<rect x="28" y="26" width="17" height="10" fill="#c49c6c"/>
<path d="M2 45 C4 36 12 31 22 31 C32 31 38 36 40 45Z" fill="#e6cbb4"/>
<path d="M10 34 C8 18 12 8 20 8 C28 8 31 16 30 34 C26 30 16 30 10 34Z" fill="#8c6c50"/>
<ellipse cx="19.5" cy="20.5" rx="6.2" ry="8" fill="#d9ac92"/>
</g></svg>
<div class="a nm" style="left:1052px;top:310.5px">Petrás Zsanett</div>
<div class="a mute" style="left:1164.2px;top:251.1px"></div>
<svg class="a" style="left:1167.1px;top:254.0px" width="11" height="11"><use href="#micoff"/></svg>

<!-- r4c1 -->
<div class="a tile" style="left:883px;top:339px;width:149px;height:88px"></div>
<div class="a av" style="left:935px;top:360.5px;width:45px;height:45px;background:#5c6bc0;font-size:23px;line-height:47px">V</div>
<div class="a nm" style="left:894.5px;top:406.5px">Vékási Alexandra</div>
<div class="a mute" style="left:1006.3px;top:347.6px"></div>
<svg class="a" style="left:1009.2px;top:350.5px" width="11" height="11"><use href="#micoff"/></svg>

<!-- r4c2 -->
<div class="a tile" style="left:1041px;top:339px;width:149px;height:88px"></div>
<svg class="a img" style="left:1088px;top:357px" width="28" height="28" viewBox="0 0 28 28">
<defs><clipPath id="cp5"><circle cx="14" cy="14" r="14"/></clipPath></defs>
<g clip-path="url(#cp5)">
<rect width="28" height="28" fill="#c8a0a8"/>
<path d="M3 28 C1 14 4 3 14 3 C24 3 27 14 25 28Z" fill="#a02a3a"/>
<ellipse cx="14" cy="14" rx="7" ry="9" fill="#e4c2ac"/>
<path d="M9 12 h3 M16 12 h3" stroke="#7a5040" stroke-width="0.8"/>
<circle cx="10" cy="21" r="4" fill="#e8a6bc"/><circle cx="16" cy="20" r="4" fill="#f2c4d4"/><circle cx="13" cy="25" r="4" fill="#e090ac"/><circle cx="18" cy="25" r="3" fill="#f0b8cc"/>
</g></svg>
<div class="a av" style="left:1113.3px;top:354.7px;width:32.6px;height:32.6px;background:#4fa23a;font-size:15px;line-height:29px;border:1.5px solid #3c4043">Sz</div>
<div class="a nm" style="left:1093px;top:396.8px">2 további</div>

<!-- self view -->
<svg class="a img" style="left:962px;top:436px" width="149" height="85.5" viewBox="0 0 149 85.5">
<defs><clipPath id="cp6"><rect width="149" height="85.5" rx="5"/></clipPath></defs>
<g clip-path="url(#cp6)">
<rect width="149" height="85.5" fill="#dcd8c4"/>
<path d="M0 0 H149 V36 L118 40 L40 24 L0 32Z" fill="#e2e2de"/>
<path d="M0 4 L62 0 H78 L0 24Z" fill="#f6f6f4"/>
<path d="M50 8 L149 30 M70 4 L149 22 M30 20 L120 38 M90 0 L60 26 M120 4 L96 32 M140 10 L130 36" stroke="#cfcfca" stroke-width="0.6" fill="none"/>
<path d="M78 14 L92 6 L104 12 L90 20Z" fill="#6a6a68"/>
<path d="M115 28 L126 22 L136 26 L124 32Z" fill="#7a7a78"/>
<rect x="118" y="38" width="31" height="48" fill="#e4e0cc"/>
<rect x="117" y="38" width="1.2" height="48" fill="#c8c2ac"/>
<rect x="0" y="26" width="10" height="14" fill="#3e5a44"/><rect x="1.5" y="28" width="7" height="10" fill="#a8b0a0"/>
<rect x="17" y="30" width="9" height="12" fill="#3e5a44"/><rect x="18.5" y="32" width="6" height="8" fill="#98a090"/>
<rect x="100" y="44" width="5" height="7" fill="#4e4e4a"/><rect x="110" y="44" width="5" height="7" fill="#4e4e4a"/>
<path d="M0 85.5 V66 C8 60 20 58 30 60 L52 62 C66 64 76 72 78 85.5Z" fill="#b9d6ee"/>
<path d="M28 60 L50 62 L48 70 L36 72Z" fill="#c09276"/>
<ellipse cx="46" cy="43" rx="21" ry="25" fill="#c99c84"/>
<ellipse cx="29" cy="45" rx="3" ry="6" fill="#bb8c72"/>
<path d="M25 38 C23 12 42 10 50 11 C64 12 70 22 68 38 C64 26 58 21 50 21 C38 21 30 27 25 38Z" fill="#3a302c"/>
<path d="M38 41 h8 M54 41 h8" stroke="#4a3a34" stroke-width="1.5"/>
<path d="M42 58 h12" stroke="#8a5a4a" stroke-width="1.5"/>
<path d="M70 85.5 C72 76 78 73 86 73 C94 73 100 77 102 85.5Z" fill="#2e3048"/>
<ellipse cx="85" cy="64" rx="11" ry="13" fill="#dcc48e"/>
<ellipse cx="87" cy="67" rx="8" ry="9" fill="#e6bda2"/>
<path d="M78 64 h8 M88 64 h8" stroke="#222" stroke-width="2"/>
<rect x="72" y="73" width="2" height="12" fill="#333"/>
<ellipse cx="131" cy="64" rx="11" ry="14" fill="#d9b878"/>
<ellipse cx="132" cy="66" rx="7" ry="10" fill="#eac6aa"/>
<path d="M112 85.5 C114 76 122 74 131 74 C140 74 146 78 149 85.5Z" fill="#f3f3f5"/>
</g></svg>
<div class="a nm" style="left:973.4px;top:503px;text-shadow:0 0 2px rgba(0,0,0,.6),0 0 1px rgba(0,0,0,.6)">Tamás Vrábely</div>

<!-- bottom bar -->
<div class="a" style="left:15.5px;top:545px;font-size:11.2px;color:#e8eaed;line-height:13px;-webkit-text-stroke:0.2px #e8eaed">12:06</div>
<div class="a" style="left:52px;top:546px;width:1px;height:11px;background:#5f6368"></div>
<div class="a" style="left:61px;top:545px;font-size:12.2px;color:#e8eaed;line-height:13px;-webkit-text-stroke:0.2px #e8eaed">tvh-kihz-ias</div>

<div class="a" style="left:434px;top:537px;width:46px;height:28px;border-radius:14px;background:#2d2e31"></div>
<div class="a btn" style="left:452px"></div>
<svg class="a" style="left:440px;top:547px" width="8" height="6" viewBox="0 0 8 6"><path d="M1 4.5 L4 1.5 L7 4.5" fill="none" stroke="#bdc1c6" stroke-width="1.2"/></svg>
<svg class="a" style="left:458px;top:543px" width="16" height="16" viewBox="0 0 24 24"><path fill="#fff" d="M12 14c1.66 0 3-1.34 3-3V5c0-1.66-1.34-3-3-3S9 3.34 9 5v6c0 1.66 1.34 3 3 3zm5.91-3c-.49 0-.9.36-.98.85C16.52 14.2 14.47 16 12 16s-4.52-1.8-4.93-4.15c-.08-.49-.49-.85-.98-.85-.61 0-1.09.54-1 1.14.49 3 2.89 5.35 5.91 5.78V20c0 .55.45 1 1 1s1-.45 1-1v-2.08c3.02-.43 5.42-2.78 5.91-5.78.1-.6-.39-1.14-1-1.14z"/></svg>

<div class="a" style="left:489px;top:537px;width:46px;height:28px;border-radius:14px;background:#2d2e31"></div>
<div class="a btn" style="left:507px"></div>
<svg class="a" style="left:495px;top:547px" width="8" height="6" viewBox="0 0 8 6"><path d="M1 4.5 L4 1.5 L7 4.5" fill="none" stroke="#bdc1c6" stroke-width="1.2"/></svg>
<svg class="a" style="left:513px;top:543px" width="16" height="16" viewBox="0 0 24 24"><path fill="none" stroke="#fff" stroke-width="2" d="M4 7h11v10H4z"/><path fill="#fff" d="M15 10l5-3.5v11L15 14z"/></svg>

<div class="a btn" style="left:543.7px"></div>
<svg class="a" style="left:549.7px;top:543px" width="16" height="16" viewBox="0 0 24 24"><rect x="3" y="5" width="18" height="14" rx="1.5" fill="none" stroke="#fff" stroke-width="2.3"/><path d="M10.8 10 C10.5 9.4 10 9.2 9.2 9.2 C8 9.2 7.3 10.2 7.3 12 C7.3 13.8 8 14.8 9.2 14.8 C10 14.8 10.5 14.6 10.8 14 M16.8 10 C16.5 9.4 16 9.2 15.2 9.2 C14 9.2 13.3 10.2 13.3 12 C13.3 13.8 14 14.8 15.2 14.8 C16 14.8 16.5 14.6 16.8 14" fill="none" stroke="#fff" stroke-width="1.7"/></svg>

<div class="a btn" style="left:580.3px"></div>
<svg class="a" style="left:586.3px;top:543px" width="16" height="16" viewBox="0 0 24 24"><circle cx="12" cy="12" r="9" fill="none" stroke="#fff" stroke-width="2"/><circle cx="8.8" cy="9.5" r="1.4" fill="#fff"/><circle cx="15.2" cy="9.5" r="1.4" fill="#fff"/><path d="M7.5 13.5 h9 c-.6 2.3-2.4 3.5-4.5 3.5 s-3.9-1.2-4.5-3.5z" fill="#fff"/></svg>

<div class="a btn" style="left:617px"></div>
<svg class="a" style="left:623px;top:543px" width="16" height="16" viewBox="0 0 24 24"><rect x="2.5" y="4.5" width="19" height="15" rx="1" fill="none" stroke="#fff" stroke-width="2"/><path d="M12 8.5 l-3.5 3.5 h2.3 v3 h2.4 v-3 h2.3z" fill="#fff"/></svg>

<div class="a btn" style="left:653.7px"></div>
<svg class="a" style="left:659.7px;top:543px" width="16" height="16" viewBox="0 0 24 24"><path d="M7.5 12 V6 a1.3 1.3 0 0 1 2.6 0 V11 V4.5 a1.3 1.3 0 0 1 2.6 0 V11 V5.5 a1.3 1.3 0 0 1 2.6 0 V11 V8 a1.3 1.3 0 0 1 2.6 0 V15 c0 4-2.6 6.5-6 6.5 c-2.6 0-4-1.5-5.4-3.5 L3.5 13.5 c.8-1 2.2-1 3 0z" fill="#3c4043" stroke="#fff" stroke-width="1.7" stroke-linejoin="round"/></svg>

<div class="a btn" style="left:690.3px"></div>
<div class="a" style="left:702.7px;top:544.5px;width:3.2px;height:3.2px;border-radius:50%;background:#fff"></div>
<div class="a" style="left:702.7px;top:549.4px;width:3.2px;height:3.2px;border-radius:50%;background:#fff"></div>
<div class="a" style="left:702.7px;top:554.3px;width:3.2px;height:3.2px;border-radius:50%;background:#fff"></div>

<div class="a" style="left:727px;top:537px;width:40px;height:28px;border-radius:14px;background:#ea4335"></div>
<svg class="a" style="left:738px;top:544px" width="18" height="14" viewBox="0 0 24 18"><path fill="#fff" d="M12 6.5c-1.6 0-3.15.25-4.6.72v3.1c0 .39-.23.74-.56.9-.98.49-1.87 1.12-2.66 1.85-.18.18-.43.28-.7.28-.28 0-.53-.11-.71-.29L.29 10.58c-.18-.17-.29-.42-.29-.7 0-.28.11-.53.29-.71C3.34 6.28 7.46 4.5 12 4.5s8.66 1.78 11.71 4.67c.18.18.29.43.29.71 0 .28-.11.53-.29.71l-2.48 2.48c-.18.18-.43.29-.71.29-.27 0-.52-.11-.7-.28-.79-.74-1.69-1.36-2.67-1.85-.33-.16-.56-.5-.56-.9v-3.1C15.15 6.75 13.6 6.5 12 6.5z"/></svg>

<!-- right icons -->
<svg class="a" style="left:1032.5px;top:543.5px" width="16" height="16" viewBox="0 0 24 24"><circle cx="12" cy="12" r="9.5" fill="none" stroke="#fff" stroke-width="2.5"/><rect x="11" y="10.5" width="2" height="7" fill="#fff"/><circle cx="12" cy="7.5" r="1.3" fill="#fff"/></svg>
<svg class="a" style="left:1066px;top:543px" width="17" height="17" viewBox="0 0 24 24"><circle cx="9" cy="8" r="3.2" fill="none" stroke="#fff" stroke-width="2.5"/><path d="M2.5 19 v-1.5 c0-2.2 4-3.5 6.5-3.5 s6.5 1.3 6.5 3.5 V19z" fill="none" stroke="#fff" stroke-width="2.5"/><path d="M15 4.8 a3.2 3.2 0 0 1 0 6.4" fill="none" stroke="#fff" stroke-width="2.5"/><path d="M17 14.2 c2.2.5 4.5 1.6 4.5 3.3 V19.5 h-3.5z" fill="#fff"/></svg>
<div class="a" style="left:1075px;top:526.8px;width:16.8px;height:16.8px;border-radius:50%;background:#5f6368;color:#fff;font-size:9px;line-height:16.8px;text-align:center;-webkit-text-stroke:0.2px #fff">11</div>
<svg class="a" style="left:1100px;top:544px" width="16" height="16" viewBox="0 0 24 24"><path d="M3 3 h18 v14 H7 l-4 4z" fill="none" stroke="#fff" stroke-width="2.5" stroke-linejoin="round"/><rect x="7" y="7" width="10" height="1.8" fill="#fff"/><rect x="7" y="10.5" width="10" height="1.8" fill="#fff"/><rect x="7" y="14" width="6" height="0" fill="#fff"/></svg>
<svg class="a" style="left:1133.8px;top:543.5px" width="16" height="16" viewBox="0 0 24 24"><path d="M12 2.5 l4 6.5 h-8z" fill="none" stroke="#fff" stroke-width="2.5" stroke-linejoin="round"/><rect x="3.5" y="13" width="7" height="7" fill="none" stroke="#fff" stroke-width="2.5"/><circle cx="17" cy="16.5" r="3.7" fill="none" stroke="#fff" stroke-width="2.5"/></svg>
<svg class="a" style="left:1168.7px;top:542.5px" width="17" height="17" viewBox="0 0 24 24"><path d="M7 10 V7 a5 5 0 0 1 10 0 V10" fill="none" stroke="#fff" stroke-width="2.5"/><path d="M14 21 H5 V10 h14 v3" fill="none" stroke="#fff" stroke-width="2.5"/><circle cx="18" cy="18" r="4.5" fill="#fff"/><rect x="16" y="17.3" width="4" height="1.5" fill="#202124"/></svg>
</body></html>
